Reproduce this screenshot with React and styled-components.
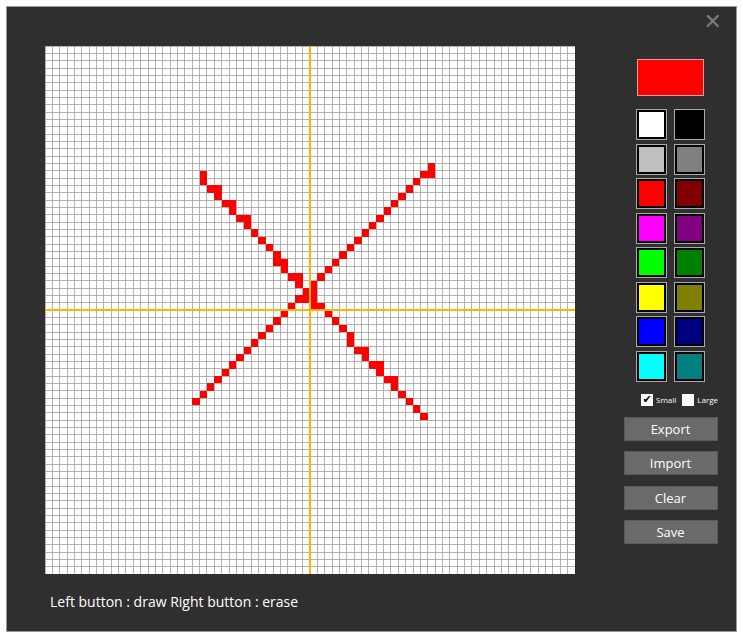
import React from "react";
import styled, { createGlobalStyle } from "styled-components";

const Global = createGlobalStyle`
  body { margin: 0; background: #fff; font-family: "Open Sans", "Liberation Sans", sans-serif; }
`;

const N = 72;
const CELL = 530 / N;
const ROW = 528 / N;

function lineCells(c0, r0, c1, r1) {
  const out = [];
  const steps = Math.max(Math.abs(r1 - r0), Math.abs(c1 - c0));
  for (let i = 0; i <= steps; i++) {
    const t = i / steps;
    const c = c0 + (c1 - c0) * t;
    const r = r0 + (r1 - r0) * t;
    const cc = Math.floor(c), rr = Math.round(r);
    out.push([cc, rr]);
    if (c - cc > 0.45 && i % 2 === 0) out.push([cc + 1, rr]);
  }
  return out;
}

const cells = [...lineCells(21, 17, 51, 50), ...lineCells(20, 48, 52, 16), [52, 17], [35, 34], [36, 35]];

const swatches = [
  ["#ffffff", "#000000"], ["#c0c0c0", "#808080"], ["#ff0000", "#800000"], ["#ff00ff", "#800080"],
  ["#00ff00", "#008000"], ["#ffff00", "#808000"], ["#0000ff", "#000080"], ["#00ffff", "#008080"],
];

export default function App() {
  const lines = [];
  for (let i = 0; i <= N; i++) {
    lines.push(<line key={"v" + i} x1={i * CELL} y1={0} x2={i * CELL} y2={528} />);
    lines.push(<line key={"h" + i} x1={0} y1={i * ROW} x2={530} y2={i * ROW} />);
  }
  return (
    <>
      <Global />
      <Frame>
        <Close>✕</Close>
        <Main>
          <Canvas width="530" height="528" viewBox="0 0 530 528">
            <rect width="530" height="528" fill="#fff" />
            <g stroke="#a0a0a0" strokeWidth="0.8">{lines}</g>
            <g fill="#ff0000">
              {cells.map(([c, r], i) => (
                <rect key={i} x={c * CELL} y={r * ROW} width={CELL} height={ROW} />
              ))}
            </g>
            <line x1="265" y1="0" x2="265" y2="528" stroke="#ffb400" strokeWidth="1.3" />
            <line x1="0" y1="264" x2="530" y2="264" stroke="#ffb400" strokeWidth="1.3" />
          </Canvas>
          <Hint>Left button : draw Right button : erase</Hint>
        </Main>
        <Side>
          <Preview />
          <Swatches>
            {swatches.flat().map((c) => (
              <Swatch key={c} $color={c} />
            ))}
          </Swatches>
          <Checks>
            <Check><Box>✔</Box>Small</Check>
            <Check><Box />Large</Check>
          </Checks>
          <Button>Export</Button>
          <Button>Import</Button>
          <Button>Clear</Button>
          <Button>Save</Button>
        </Side>
      </Frame>
    </>
  );
}

const Frame = styled.div`
  position: relative;
  margin: 6px;
  width: 729px;
  height: 624px;
  border: 1px solid #9a9a9a;
  background: #2f2f2f;
  display: flex;
  box-sizing: content-box;
`;

const Close = styled.div`
  position: absolute;
  right: 14px;
  top: 2px;
  color: #7a7a7a;
  font-size: 22px;
  font-family: "DejaVu Sans", sans-serif;
`;

const Main = styled.div`
  padding: 39px 0 0 38px;
  display: flex;
  flex-direction: column;
`;

const Canvas = styled.svg`
  display: block;
  shape-rendering: crispEdges;
`;

const Hint = styled.div`
  margin: 18px 0 0 5px;
  color: #fff;
  font-size: 14px;
`;

const Side = styled.div`
  margin-left: 48px;
  padding-top: 52px;
  width: 95px;
  display: flex;
  flex-direction: column;
  align-items: center;
`;

const Preview = styled.div`
  width: 65px;
  height: 35px;
  background: #ff0000;
  border: 1px solid #d9a0a0;
  margin-left: -1px;
`;

const Swatches = styled.div`
  margin-top: 13px;
  display: grid;
  grid-template-columns: 31px 31px;
  column-gap: 7px;
  row-gap: 3.5px;
  margin-left: -1px;
`;

const Swatch = styled.div`
  width: 31px;
  height: 31px;
  box-sizing: border-box;
  border: 1px solid #aaa;
  background: ${(p) => p.$color};
  box-shadow: inset 0 0 0 2px #000;
`;

const Checks = styled.div`
  display: flex;
  gap: 6px;
  margin: 12px 0 11px 18px;
`;

const Check = styled.div`
  display: flex;
  align-items: center;
  gap: 3px;
  color: #fff;
  font-size: 8px;
`;

const Box = styled.span`
  width: 12px;
  height: 12px;
  background: #fff;
  color: #000;
  font-size: 11px;
  line-height: 12px;
  text-align: center;
  font-family: "DejaVu Sans", sans-serif;
`;

const Button = styled.div`
  width: 94px;
  height: 24px;
  margin-bottom: 10.5px;
  background: #6a6a6a;
  border: 1px solid #5a5a5a;
  box-sizing: border-box;
  color: #fff;
  font-size: 13px;
  display: flex;
  align-items: center;
  justify-content: center;
`;
